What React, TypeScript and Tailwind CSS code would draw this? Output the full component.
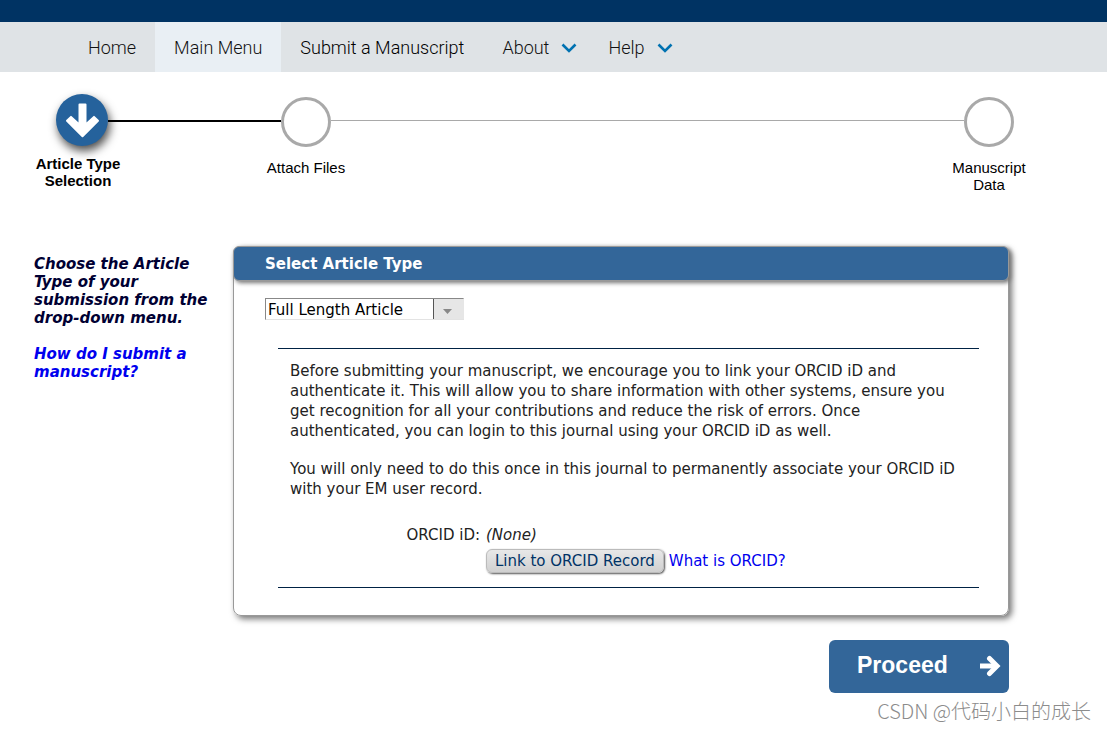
import React, { useState } from "react";

const ChevronDown: React.FC = () => (
  <svg width="16" height="10" viewBox="0 0 16 10" fill="none" aria-hidden="true">
    <path d="M1.500 1.500L8 8L14.500 1.500" stroke="#0072b1" strokeWidth="2.600" />
  </svg>
);

const App: React.FC = () => {
  const [articleType, setArticleType] = useState<string>("full");

  return (
    <div className="bg-white text-black font-['DejaVu_Sans',Verdana,sans-serif] text-[15px]">
      <header>
        <div className="h-[22px] bg-[#003363]" />
        <nav className="flex h-[50px] bg-[#dfe3e6] pl-[69px] font-[Roboto,sans-serif] text-lg font-light text-[#111]">
          <a href="#home" className="flex items-center px-[19px] pt-0.5">
            Home
          </a>
          <a href="#menu" className="flex items-center bg-[#e9eff4] px-[19px] pt-0.5">
            Main Menu
          </a>
          <a href="#submit" className="flex items-center px-[19px] pt-0.5 text-black">
            Submit a Manuscript
          </a>
          <a href="#about" className="flex items-center gap-3 pl-[19px] pr-3 pt-0.5">
            About <ChevronDown />
          </a>
          <a href="#help" className="flex items-center gap-3 pl-[19px] pr-3 pt-0.5">
            Help <ChevronDown />
          </a>
        </nav>
      </header>

      <ol className="flex items-start pl-14 pr-[93px] pt-[22px] font-['Liberation_Sans',Arial,sans-serif] leading-[17px] text-center">
        <li className="flex w-[52px] flex-col items-center">
          <span className="flex size-[52px] shrink-0 items-center justify-center rounded-full bg-[#25629c] shadow-[2px_5px_10px_rgba(0,0,0,0.7)]">
            <svg width="37" height="37" viewBox="0 0 37 37" aria-hidden="true">
              <path
                d="M15.500 2.500H21.500V22.800L30 14.900L34 18.700L18.500 34.300L3 18.700L7 14.900L15.500 22.800Z"
                fill="white"
                stroke="white"
                strokeWidth="2"
                strokeLinejoin="round"
              />
            </svg>
          </span>
          <span className="mt-[9px] w-24 shrink-0 pr-2 font-bold">
            Article Type Selection
          </span>
        </li>
        <li aria-hidden="true" className="mt-[26px] h-[2px] w-[173px] bg-black" />
        <li className="flex w-[50px] flex-col items-center pt-[3px]">
          <span className="size-[50px] shrink-0 rounded-full border-3 border-[#a9a9a9]" />
          <span className="mt-[12px] w-24 shrink-0">Attach Files</span>
        </li>
        <li aria-hidden="true" className="mt-[26px] h-px flex-1 bg-[#a9a9a9]" />
        <li className="flex w-[50px] flex-col items-center pt-[3px]">
          <span className="size-[50px] shrink-0 rounded-full border-3 border-[#a9a9a9]" />
          <span className="mt-[12px] w-24 shrink-0">Manuscript Data</span>
        </li>
      </ol>

      <main className="flex pl-[34px] pr-[98px] pt-[53px]">
        <aside className="w-[199px] shrink-0 pr-6 pt-[9px] font-bold italic leading-[18px] text-[#000033]">
          <p>Choose the Article Type of your submission from the drop-down menu.</p>
          <a href="#how" className="mt-[18px] block text-[#0000ee]">
            How do I submit a manuscript?
          </a>
        </aside>

        <div className="flex-1">
          <section className="rounded-lg border border-[#999] shadow-[3px_3px_6px_#777]">
            <h2 className="-mx-px -mt-px flex h-[35px] items-center rounded-md border border-[#999] bg-[#336699] px-[31px] pt-0.5 font-bold text-white shadow-[2px_2px_4px_#777]">
              Select Article Type
            </h2>

            <div className="px-[31px] pt-[17px]">
              <div className="relative w-[199px]">
                <select
                  aria-label="Article type"
                  value={articleType}
                  onChange={(e) => setArticleType(e.target.value)}
                  className="block h-[22px] w-full appearance-none border border-b-[#e3e3e3] border-l-[#888] border-r-[#e3e3e3] border-t-[#888] bg-white pl-[2px] pr-8 text-black"
                >
                  <option value="full">Full Length Article</option>
                  <option value="review">Review Article</option>
                  <option value="short">Short Communication</option>
                </select>
                <span className="pointer-events-none absolute bottom-px right-0 top-px flex w-[31px] items-center justify-center border-l border-[#555] bg-[#e6e6e6] pr-1">
                  <svg width="9" height="5" viewBox="0 0 9 5" className="mt-1" aria-hidden="true">
                    <path d="M0 0H9L4.500 5Z" fill="#888" />
                  </svg>
                </span>
              </div>
            </div>

            <div className="mb-[27px] ml-11 mr-[29px] mt-7 border-y border-[#002244] px-3 pb-[14px] pt-3 leading-5 text-[#222]">
              <p>
                Before submitting your manuscript, we encourage you to link your ORCID iD and
                authenticate it. This will allow you to share information with other systems, ensure you
                get recognition for all your contributions and reduce the risk of errors. Once
                authenticated, you can login to this journal using your ORCID iD as well.
              </p>
              <p className="mt-[18px]">
                You will only need to do this once in this journal to permanently associate your ORCID iD
                with your EM user record.
              </p>
              <dl className="mt-[26px] grid grid-cols-[190px_1fr] gap-x-[6px]">
                <dt className="text-right">ORCID iD:</dt>
                <dd className="italic">(None)</dd>
                <dd className="col-start-2 mt-1 flex items-center gap-[5px]">
                  <button
                    type="button"
                    className="h-6 rounded-md border border-[#bbb] bg-linear-to-b from-[#e8e8e8] to-[#d0d0d0] px-2 text-[#003366] shadow-[1px_1px_2px_#555]"
                  >
                    Link to ORCID Record
                  </button>
                  <a href="#orcid" className="text-[#0000ee]">
                    What is ORCID?
                  </a>
                </dd>
              </dl>
            </div>
          </section>

          <div className="mt-6 flex justify-end">
            <button
              type="button"
              className="flex h-[53px] w-[180px] items-center justify-between rounded-md bg-[#336699] pb-0.5 pl-7 pr-2 font-['Liberation_Sans',Arial,sans-serif] text-[23px] font-bold text-white"
            >
              Proceed
              <svg
                width="22"
                height="22"
                viewBox="0 0 22 22"
                fill="none"
                stroke="white"
                strokeWidth="5"
                aria-hidden="true"
              >
                <path d="M1 11H17" />
                <path d="M10.500 3.500L18 11L10.500 18.500" strokeLinecap="round" />
              </svg>
            </button>
          </div>
        </div>
      </main>

      <footer className="pr-4 pt-1 text-right font-['Noto_Sans_CJK_SC',sans-serif] text-xl font-light leading-7 text-[#8c8c8c]">
        CSDN @代码小白的成长
      </footer>
    </div>
  );
};

export default App;
